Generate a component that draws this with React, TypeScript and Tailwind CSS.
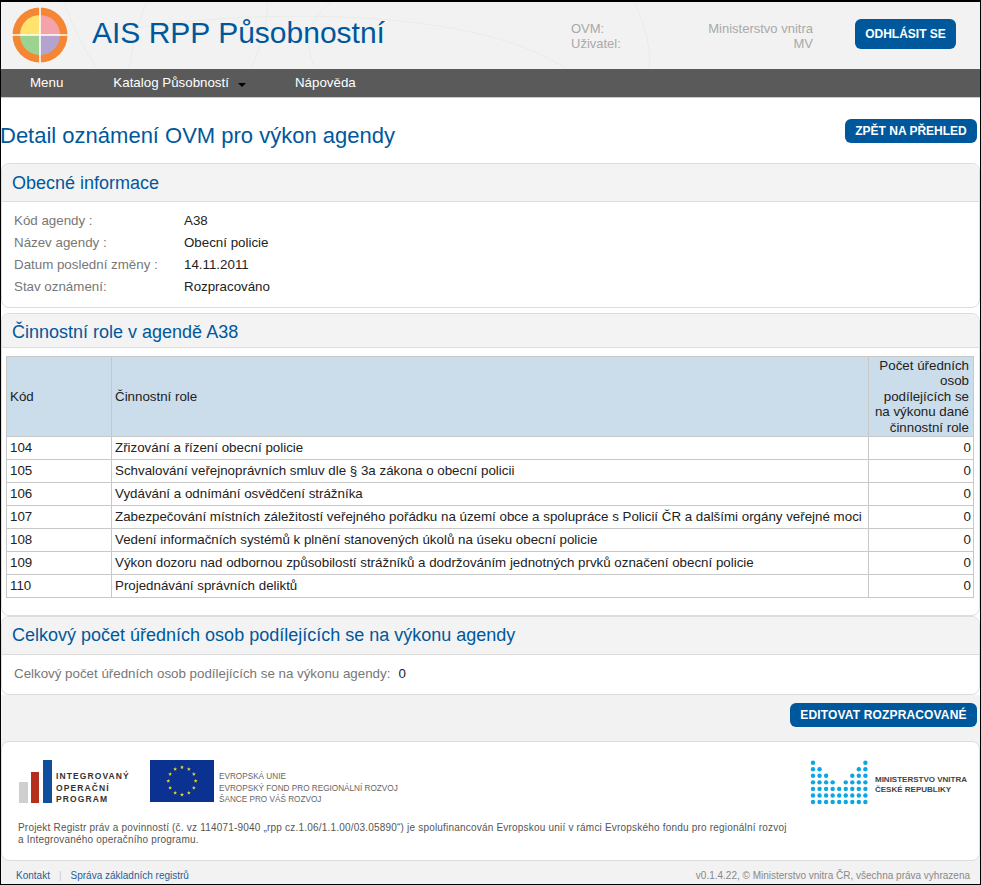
const rows: [string, string][] = [
  ["104", "Zřizování a řízení obecní policie"],
  ["105", "Schvalování veřejnoprávních smluv dle § 3a zákona o obecní policii"],
  ["106", "Vydávání a odnímání osvědčení strážníka"],
  ["107", "Zabezpečování místních záležitostí veřejného pořádku na území obce a spolupráce s Policií ČR a dalšími orgány veřejné moci"],
  ["108", "Vedení informačních systémů k plnění stanovených úkolů na úseku obecní policie"],
  ["109", "Výkon dozoru nad odbornou způsobilostí strážníků a dodržováním jednotných prvků označení obecní policie"],
  ["110", "Projednávání správních deliktů"],
];

const info: [string, string][] = [
  ["Kód agendy :", "A38"],
  ["Název agendy :", "Obecní policie"],
  ["Datum poslední změny :", "14.11.2011"],
  ["Stav oznámení:", "Rozpracováno"],
];

function Logo() {
  return (
    <svg width="56" height="56" viewBox="0 0 56 56" className="shrink-0">
      <circle cx="28" cy="28" r="27.5" fill="#f58634" />
      <path d="M28 28V8a20 20 0 0 0-20 20z" fill="#ffe36e" />
      <path d="M28 28V8a20 20 0 0 1 20 20z" fill="#f5a3ab" />
      <path d="M28 28v20a20 20 0 0 1-20-20z" fill="#9dd391" />
      <path d="M28 28v20a20 20 0 0 0 20-20z" fill="#b4a2cf" />
      <path d="M28 0v56M0 28h56" stroke="#fff" strokeWidth="1.6" />
    </svg>
  );
}

function starPoints(cx: number, cy: number, R: number) {
  const pts: string[] = [];
  for (let i = 0; i < 10; i++) {
    const r = i % 2 === 0 ? R : R * 0.4;
    const a = (i * Math.PI) / 5;
    pts.push(`${(cx + r * Math.sin(a)).toFixed(2)},${(cy - r * Math.cos(a)).toFixed(2)}`);
  }
  return pts.join(" ");
}

function EuFlag() {
  const stars = Array.from({ length: 12 }, (_, i) => {
    const a = (i * Math.PI) / 6;
    return { x: 32 + 13.7 * Math.sin(a), y: 21 - 13.7 * Math.cos(a) };
  });
  return (
    <svg width="64" height="42" viewBox="0 0 64 42" className="shrink-0">
      <rect width="64" height="42" fill="#0b3191" />
      {stars.map((s, i) => (
        <polygon key={i} points={starPoints(s.x, s.y, 2.1)} fill="#f6dd1c" />
      ))}
    </svg>
  );
}

function OpBars() {
  return (
    <svg width="33" height="43" viewBox="0 0 33 43" className="shrink-0">
      <rect x="0" y="22" width="9" height="21" fill="#cfcfcf" />
      <rect x="12" y="12" width="8" height="31" fill="#b5301c" />
      <rect x="24" y="0" width="9" height="43" fill="#0f4f9e" />
    </svg>
  );
}

function MvDots() {
  const dots: { x: number; y: number }[] = [];
  [7, 6, 5, 4, 3, 4, 5, 6, 7].forEach((h, c) => {
    for (let r = 0; r < h; r++) dots.push({ x: 3 + c * 6.55, y: 42 - r * 6.55 });
  });
  return (
    <svg width="60" height="47" viewBox="0 0 60 47" className="shrink-0">
      {dots.map((d, i) => (
        <circle key={i} cx={d.x} cy={d.y} r="2.2" fill="#0ca6e0" />
      ))}
    </svg>
  );
}

function Arcs() {
  return (
    <svg className="absolute left-0 top-0 pointer-events-none" width="660" height="67" viewBox="0 0 660 67" fill="none" stroke="#e9ede9" strokeWidth="1">
      <path d="M63 0C72 25 85 50 96 67" />
      <path d="M128 67C132 40 138 15 146 0" />
      <path d="M250 67C262 40 268 15 266 0" />
      <path d="M113 30C220 8 470 0 565 67" />
      <path d="M315 67C300 40 310 15 330 0" />
      <path d="M633 0C646 25 650 50 648 67" />
    </svg>
  );
}

function Btn({ children, className }: { children: string; className: string }) {
  return (
    <button className={`bg-[#00589c] text-white font-bold rounded-[6px] text-[12px] leading-none ${className}`}>
      {children}
    </button>
  );
}

function PanelHead({ children, className }: { children: string; className: string }) {
  return (
    <div className={`bg-[#f3f3f3] border-b border-[#dddddd] rounded-t-[8px] pl-[10px] flex items-center text-[#00589c] text-[18px] ${className}`}>
      {children}
    </div>
  );
}

export default function App() {
  return (
    <div className="w-[981px] h-[885px] overflow-hidden border border-black border-t-2 bg-[#f2f2f2] text-[13.33px] text-[#222222] flex flex-col font-['Liberation_Sans',Arial,sans-serif]">
      <header className="relative h-[67px] shrink-0 flex items-center">
        <Arcs />
        <div className="relative ml-[11px] mt-[-2px]">
          <Logo />
        </div>
        <div className="relative ml-[24px] mt-[-6px] text-[#00589c] text-[30px] leading-none">AIS RPP Působnostní</div>
        <div className="relative ml-auto flex items-center">
          <div className="text-[#a9a9a9] text-[13px] leading-[15.5px] mt-[1px] w-[242px] flex justify-between">
            <div>
              <div>OVM:</div>
              <div>Uživatel:</div>
            </div>
            <div className="text-right">
              <div>Ministerstvo vnitra</div>
              <div>MV</div>
            </div>
          </div>
          <Btn className="w-[101px] h-[30px] ml-[42px] mr-[24px] mt-[-3px]">ODHLÁSIT SE</Btn>
        </div>
      </header>
      <nav className="h-[28px] shrink-0 bg-[#5a5a5a] border-b border-[#cccccc] flex items-center text-white box-content">
        <span className="ml-[29px]">Menu</span>
        <span className="ml-[50px] flex items-center">
          Katalog Působností
          <span className="ml-[9px] mt-[5px] w-0 h-0 border-x-[4px] border-x-transparent border-t-[4px] border-t-black" />
        </span>
        <span className="ml-[49px]">Nápověda</span>
      </nav>
      <section className="bg-white flex flex-col">
        <div className="h-[65px] flex items-center justify-between">
          <h1 className="text-[#00589c] text-[22px] font-normal leading-none mt-[11px] ml-[-1px]">Detail oznámení OVM pro výkon agendy</h1>
          <Btn className="w-[132px] h-[24px] mr-[3px] mt-[1px]">ZPĚT NA PŘEHLED</Btn>
        </div>
        <div className="border border-[#dddddd] rounded-[8px]">
          <PanelHead className="h-[38px] pt-[1px]">Obecné informace</PanelHead>
          <div className="pl-[12px] pt-[8px] pb-[9px]">
            {info.map(([k, v]) => (
              <div key={k} className="flex h-[22px] items-center">
                <span className="w-[170px] text-[#777777]">{k}</span>
                <span>{v}</span>
              </div>
            ))}
          </div>
        </div>
        <div className="h-[5px]" />
        <div className="border border-[#dddddd] rounded-[8px] pb-[17px]">
          <PanelHead className="h-[34px] pt-[3px]">Činnostní role v agendě A38</PanelHead>
          <div className="px-[4px] pt-[8px]">
            <table className="w-[968px] border-collapse table-fixed">
              <thead>
                <tr className="bg-[#cbdcea] h-[80px]">
                  <th className="w-[105px] border border-[#c8c8c8] font-normal text-left pl-[3px]">Kód</th>
                  <th className="border border-[#c8c8c8] font-normal text-left pl-[3px]">Činnostní role</th>
                  <th className="w-[105px] border border-[#c8c8c8] font-normal text-right px-[4px] leading-[15.5px]">
                    Počet úředních osob podílejících se na výkonu dané činnostní role
                  </th>
                </tr>
              </thead>
              <tbody>
                {rows.map(([c, r]) => (
                  <tr key={c} className="h-[23px]">
                    <td className="border border-[#c8c8c8] pl-[3px]">{c}</td>
                    <td className="border border-[#c8c8c8] pl-[3px] whitespace-nowrap">{r}</td>
                    <td className="border border-[#c8c8c8] text-right pr-[2px]">0</td>
                  </tr>
                ))}
              </tbody>
            </table>
          </div>
        </div>
        <div className="border border-[#dddddd] rounded-[8px]">
          <PanelHead className="h-[38px]">Celkový počet úředních osob podílejících se na výkonu agendy</PanelHead>
          <div className="h-[39px] pl-[12px] pb-[2px] flex items-center">
            <span className="text-[#777777]">Celkový počet úředních osob podílejících se na výkonu agendy:</span>
            <span className="ml-[8px]">0</span>
          </div>
        </div>
      </section>
      <div className="h-[46px] shrink-0 flex items-start justify-end pt-[8px] pr-[3px]">
        <Btn className="w-[187px] h-[24px] tracking-[0.15px]">EDITOVAT ROZPRACOVANÉ</Btn>
      </div>
      <section className="h-[120px] shrink-0 bg-white border border-[#dddddd] rounded-[8px] pl-[17px] pr-[12px] pt-[18px]">
        <div className="flex items-start">
          <OpBars />
          <div className="ml-[4px] mt-[11px] font-bold text-[8.5px] leading-[11.5px] tracking-[1.1px] text-[#333333] w-[94px]">
            INTEGROVANÝ<br />OPERAČNÍ<br />PROGRAM
          </div>
          <EuFlag />
          <div className="ml-[5px] mt-[11px] text-[8.2px] leading-[11.5px] text-[#666666]">
            EVROPSKÁ UNIE<br />EVROPSKÝ FOND PRO REGIONÁLNÍ ROZVOJ<br />ŠANCE PRO VÁŠ ROZVOJ
          </div>
          <div className="ml-auto flex items-start">
            <MvDots />
            <div className="ml-[5px] mt-[15px] text-[8px] leading-[10px] font-bold text-[#444444]">
              MINISTERSTVO VNITRA<br />ČESKÉ REPUBLIKY
            </div>
          </div>
        </div>
        <p className="mt-[15px] ml-[-1px] text-[10px] leading-[12px] text-[#555555] tracking-[0.2px]">
          Projekt Registr práv a povinností (č. vz 114071-9040 „rpp cz.1.06/1.1.00/03.05890“) je spolufinancován Evropskou unií v rámci Evropského fondu pro regionální rozvoj<br />
          a Integrovaného operačního programu.
        </p>
      </section>
      <footer className="flex-1 flex items-center justify-between pl-[15px] pr-[10px] pt-[5px] text-[10px] text-[#888888]">
        <div className="flex items-center text-[#1f5f96]">
          <span>Kontakt</span>
          <span className="mx-[9px] text-[#cccccc]">|</span>
          <span>Správa základních registrů</span>
        </div>
        <span>v0.1.4.22, © Ministerstvo vnitra ČR, všechna práva vyhrazena</span>
      </footer>
    </div>
  );
}
